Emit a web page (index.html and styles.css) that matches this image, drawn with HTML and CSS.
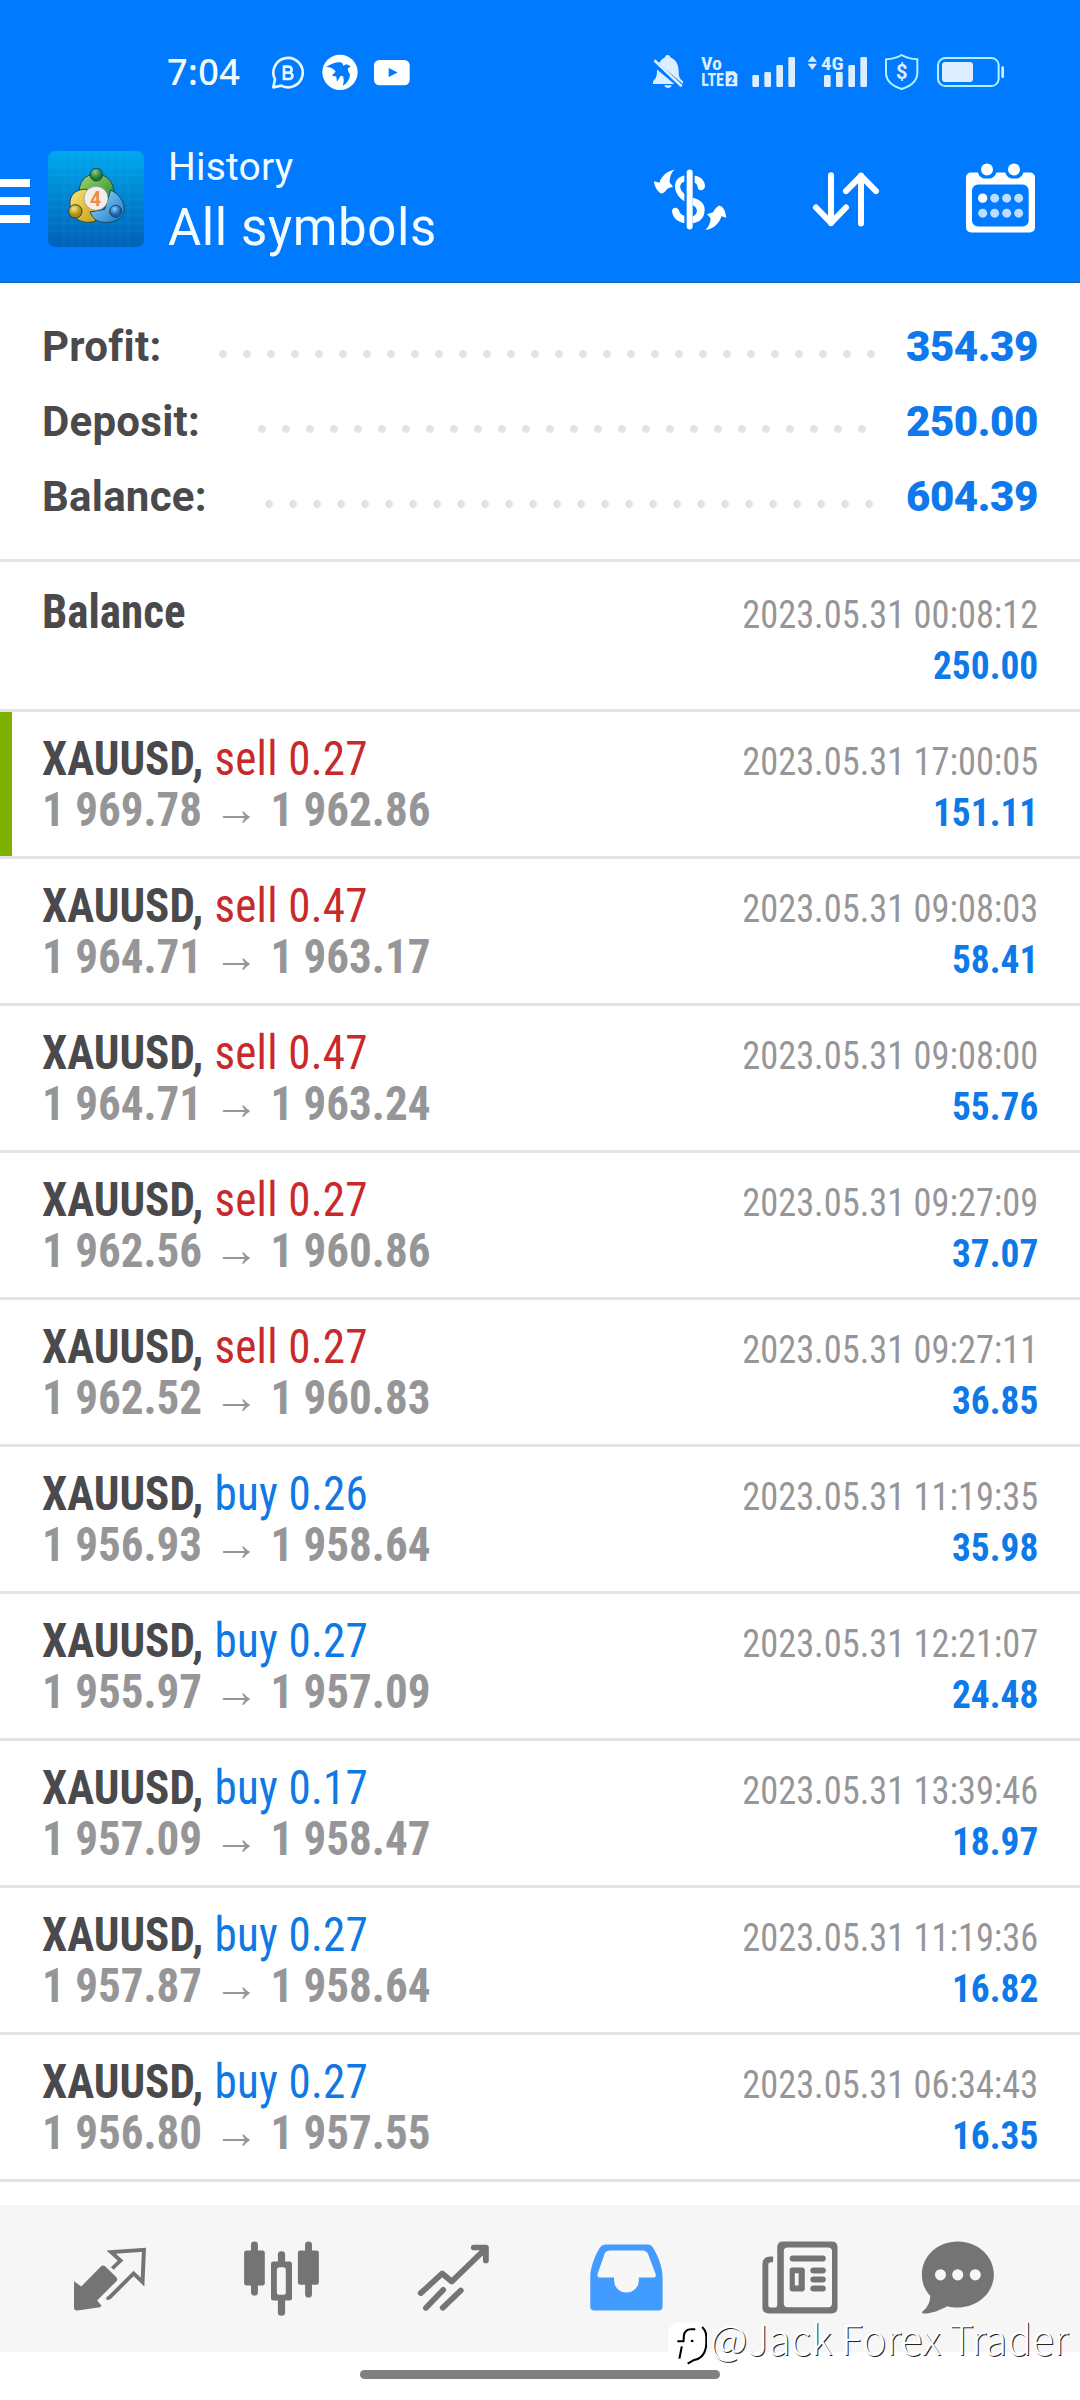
FILE: index.html
```html
<!DOCTYPE html>
<html lang="en">
<head>
<meta charset="utf-8">
<title>History</title>
<link rel="stylesheet" href="styles.css">
</head>
<body>
<header class="top">
  <div class="status">
    <span class="clock">7:04</span>
    <svg class="sico" viewBox="390 42 108 108" fill="none" stroke="#e8f6ff"><path d="M400 142 L405 118 A44 44 0 1 1 424 137 Z" stroke-width="8" stroke-linejoin="round"/><path d="M432 80h14a9 9 0 0 1 0 18h-14zM432 98h16a9 9 0 0 1 0 19h-16z" stroke-width="8"/></svg>
    <svg class="sico" viewBox="546 42 108 108"><circle cx="600" cy="97" r="53" fill="#fff"/><path d="M558 81q24-16 44-14 8 2 8 10l10-4 12 6-9 7q2 12 7 17-1 22-22 35 6-16 1-29l-7-2-11 18-2-15-14-4q10-6 12-12-12-14-29-13z" fill="#007aff"/></svg>
    <svg class="sico" viewBox="702 42 108 108"><rect x="702" y="60" width="107" height="76" rx="16" fill="#fff"/><path d="M746 84v27l27-13.500z" fill="#007aff"/></svg>
    <svg class="system" viewBox="66 42 1059 108" fill="#dceeff">
      <path d="M69 132v-8c10-8 12-18 12-30 0-22 12-36 24-42 2-9 14-9 16 0 15 6 25 20 25 42 0 16 3 24 13 30v8z"/><path d="M103 136h22c-2 11-20 11-22 0z"/><path d="M68 66l90 76" stroke="#007aff" stroke-width="17"/><path d="M73 61l82 78" stroke="#dceeff" stroke-width="8"/>
      <text class="net" x="213" y="91" font-size="54" textLength="63" lengthAdjust="spacingAndGlyphs">Vo</text>
      <text class="net" x="214" y="138" font-size="54" textLength="68" lengthAdjust="spacingAndGlyphs">LTE</text>
      <path d="M287 94h26l9 9v36h-35z"/><text class="net dark" x="294" y="132" font-size="38">2</text>
      <rect x="367" y="105" width="20" height="36" rx="4"/><rect x="403" y="96" width="20" height="45" rx="4"/><rect x="439" y="75" width="20" height="66" rx="4"/><rect x="475" y="51" width="20" height="90" rx="4"/>
      <path d="M533 65l14-18 14 18zM533 71h28l-14 18z"/>
      <text class="net" x="573" y="91" font-size="57" textLength="68" lengthAdjust="spacingAndGlyphs">4G</text>
      <rect x="582" y="105" width="20" height="36" rx="4"/><rect x="618" y="96" width="20" height="45" rx="4"/><rect x="655" y="75" width="20" height="66" rx="4"/><rect x="691" y="51" width="20" height="90" rx="4"/>
      <path d="M815 45c14 9 30 12 47 13v40c0 25-20 40-47 49-27-9-47-24-47-49V58c17-1 33-4 47-13z" fill="none" stroke="#b5f0ff" stroke-width="6"/>
      <text class="dollar" x="815" y="118" font-size="60" text-anchor="middle">$</text>
      <rect x="924" y="54" width="182" height="84" rx="22" fill="none" stroke="#b5f0ff" stroke-width="6"/><rect x="936" y="66" width="93" height="60" rx="10"/><rect x="1114" y="79" width="8" height="35" rx="4"/>
    </svg>
  </div>
  <div class="appbar">
    <div class="menu"><i></i><i></i><i></i></div>
    <svg class="logo" viewBox="144 63 288 288">
      <defs>
        <linearGradient id="bg" x1="0" y1="0" x2="0" y2="1"><stop offset="0" stop-color="#00a9ee"/><stop offset=".5" stop-color="#0083cf"/><stop offset="1" stop-color="#0060b8"/></linearGradient>
        <linearGradient id="gr" x1="0" y1="0" x2="1" y2="1"><stop offset="0" stop-color="#a5d96a"/><stop offset="1" stop-color="#268a35"/></linearGradient>
        <linearGradient id="ye" x1="0" y1="0" x2="1" y2="1"><stop offset="0" stop-color="#fbe87a"/><stop offset="1" stop-color="#c79a10"/></linearGradient>
        <linearGradient id="bl" x1="0" y1="0" x2="1" y2="1"><stop offset="0" stop-color="#9fe0ff"/><stop offset="1" stop-color="#1673c5"/></linearGradient>
        <radialGradient id="gb" cx=".4" cy=".3"><stop offset="0" stop-color="#8ed080"/><stop offset="1" stop-color="#1e7a32"/></radialGradient>
        <radialGradient id="yb" cx=".4" cy=".3"><stop offset="0" stop-color="#f7e680"/><stop offset="1" stop-color="#b08a10"/></radialGradient>
        <radialGradient id="bb" cx=".4" cy=".3"><stop offset="0" stop-color="#8ccbff"/><stop offset="1" stop-color="#1260b0"/></radialGradient>
      </defs>
      <rect x="144" y="63" width="288" height="288" rx="22" fill="url(#bg)"/>
      <path d="M192 63v288M216 63v288M240 63v288M264 63v288M288 63v288M312 63v288M336 63v288M360 63v288M384 63v288M144 111h288M144 135h288M144 159h288M144 183h288M144 207h288M144 231h288M144 255h288M144 279h288M144 303h288" stroke="#3fc0ff" stroke-opacity=".22" stroke-width="2"/>
      <g stroke="#174a55" stroke-width="3">
        <path d="M238 194c-4-38 18-62 50-62s56 22 54 66l-20 14-60-30z" fill="url(#gr)"/>
        <path d="M262 178c-30-2-56 12-52 52 4 32 34 56 76 44l8-30-30-26z" fill="url(#ye)"/>
        <path d="M332 180c26 12 44 38 40 66-8 30-56 40-84 24-8-6-14-14-18-24l44-8z" fill="url(#bl)"/>
        <circle cx="289" cy="134" r="19" fill="url(#gb)"/><circle cx="226" cy="244" r="20" fill="url(#yb)"/><circle cx="347" cy="244" r="18" fill="url(#bb)"/>
      </g>
      <circle cx="288" cy="205" r="36" fill="#f1eeec" stroke="#8c8c80" stroke-width="2"/>
      <text class="four" x="287" y="228" text-anchor="middle">4</text>
    </svg>
    <div class="titles"><div class="sub">History</div><div class="main">All symbols</div></div>
    <svg class="act" width="74" height="72" viewBox="99 67.500 222 216" fill="#fff"><path d="M209 96v162" stroke="#fff" stroke-width="18" stroke-linecap="round"/><path d="M193 105c-18 3-28 17-28 32 0 24 17 37 28 45v-22c-17-15-16-31 0-37z"/><path d="M224 106c17 1 29 14 31 29 1 13-14 19-21 10-2-11-4-16-10-18zM193 248c-21-3-36-18-37-37 0-9 12-14 20-4 3 11 8 17 17 19zM218 172c23 5 36 18 36 35 0 24-14 39-36 41v-20c17-8 17-27 0-34z"/><path d="M165 87c-11 7-16 22-16 39l10 12c-6 4-10 3-16 6-5 6-9 14-18 15-12-4-22-22-23-37l16 5c7-21 23-36 47-40zM256 268c9-8 15-19 16-35l-11-12c6-3 12-4 18-6 5-8 10-16 19-20 15 4 19 22 21 37l-15-5c-6 22-24 39-48 41z"/></svg>
    <svg class="act" width="68" height="72" viewBox="576 67.500 204 216" fill="none" stroke="#fff" stroke-width="18" stroke-linecap="round" stroke-linejoin="round"><path d="M633 104v144M588 201l45 46 45-46M723 249V105M678 152l45-46 45 46"/></svg>
    <svg class="act" width="71" height="72" viewBox="1035 67.500 213 216"><path d="M1053 96h21c3 11 11 18 21 18h13c10 0 18-7 21-18h27c3 11 11 18 21 18h12c10 0 18-7 21-18h20a15 15 0 0 1 15 15v150a15 15 0 0 1-15 15h-177a15 15 0 0 1-15-15V111a15 15 0 0 1 15-15zM1074 132a18 18 0 0 0-18 18v90a18 18 0 0 0 18 18h134a18 18 0 0 0 18-18v-90a18 18 0 0 0-18-18z" fill="#fff" fill-rule="evenodd"/><g fill="#fff"><circle cx="1101" cy="87" r="18"/><circle cx="1182" cy="87" r="18"/><circle cx="1088" cy="173" r="14"/></g><g fill="#b9deff"><circle cx="1124" cy="173" r="13.500"/><circle cx="1160" cy="173" r="13.500"/><circle cx="1196" cy="173" r="13.500"/><circle cx="1088" cy="218" r="13.500"/><circle cx="1124" cy="218" r="13.500"/><circle cx="1160" cy="218" r="13.500"/><circle cx="1196" cy="218" r="13.500"/></g></svg>
  </div>
</header>

<section class="summary">
  <div class="sum"><span>Profit:</span><i class="dots"></i><b>354.39</b></div>
  <div class="sum"><span>Deposit:</span><i class="dots"></i><b>250.00</b></div>
  <div class="sum"><span>Balance:</span><i class="dots"></i><b>604.39</b></div>
</section>

<main class="deals">
  <div class="deal first"><div class="l"><div><b class="sym">Balance</b></div></div><div class="r"><div class="date">2023.05.31 00:08:12</div><div class="val">250.00</div></div></div>
  <div class="deal marked"><div class="l"><div><b class="sym">XAUUSD,</b> <span class="sell">sell 0.27</span></div><div class="price">1 969.78<span class="arrow">→</span>1 962.86</div></div><div class="r"><div class="date">2023.05.31 17:00:05</div><div class="val">151.11</div></div></div>
  <div class="deal"><div class="l"><div><b class="sym">XAUUSD,</b> <span class="sell">sell 0.47</span></div><div class="price">1 964.71<span class="arrow">→</span>1 963.17</div></div><div class="r"><div class="date">2023.05.31 09:08:03</div><div class="val">58.41</div></div></div>
  <div class="deal"><div class="l"><div><b class="sym">XAUUSD,</b> <span class="sell">sell 0.47</span></div><div class="price">1 964.71<span class="arrow">→</span>1 963.24</div></div><div class="r"><div class="date">2023.05.31 09:08:00</div><div class="val">55.76</div></div></div>
  <div class="deal"><div class="l"><div><b class="sym">XAUUSD,</b> <span class="sell">sell 0.27</span></div><div class="price">1 962.56<span class="arrow">→</span>1 960.86</div></div><div class="r"><div class="date">2023.05.31 09:27:09</div><div class="val">37.07</div></div></div>
  <div class="deal"><div class="l"><div><b class="sym">XAUUSD,</b> <span class="sell">sell 0.27</span></div><div class="price">1 962.52<span class="arrow">→</span>1 960.83</div></div><div class="r"><div class="date">2023.05.31 09:27:11</div><div class="val">36.85</div></div></div>
  <div class="deal"><div class="l"><div><b class="sym">XAUUSD,</b> <span class="buy">buy 0.26</span></div><div class="price">1 956.93<span class="arrow">→</span>1 958.64</div></div><div class="r"><div class="date">2023.05.31 11:19:35</div><div class="val">35.98</div></div></div>
  <div class="deal"><div class="l"><div><b class="sym">XAUUSD,</b> <span class="buy">buy 0.27</span></div><div class="price">1 955.97<span class="arrow">→</span>1 957.09</div></div><div class="r"><div class="date">2023.05.31 12:21:07</div><div class="val">24.48</div></div></div>
  <div class="deal"><div class="l"><div><b class="sym">XAUUSD,</b> <span class="buy">buy 0.17</span></div><div class="price">1 957.09<span class="arrow">→</span>1 958.47</div></div><div class="r"><div class="date">2023.05.31 13:39:46</div><div class="val">18.97</div></div></div>
  <div class="deal"><div class="l"><div><b class="sym">XAUUSD,</b> <span class="buy">buy 0.27</span></div><div class="price">1 957.87<span class="arrow">→</span>1 958.64</div></div><div class="r"><div class="date">2023.05.31 11:19:36</div><div class="val">16.82</div></div></div>
  <div class="deal"><div class="l"><div><b class="sym">XAUUSD,</b> <span class="buy">buy 0.27</span></div><div class="price">1 956.80<span class="arrow">→</span>1 957.55</div></div><div class="r"><div class="date">2023.05.31 06:34:43</div><div class="val">16.35</div></div></div>
</main>

<nav class="tabs">
  <svg viewBox="203.300 229.500 232.300 252" preserveAspectRatio="none" fill="#747474"><path d="M215 362l21 16 57-60q6-6 13 0l32 32q5 6 0 12l-56 58 13 16q-1 3-5 4l-65 10q-10 1-10-9z"/><path d="M326 324l24-24-27-25 95-7-4 97-26-26-71 73" fill="none" stroke="#747474" stroke-width="11.500"/><circle cx="314" cy="413" r="5.500"/></svg>
  <svg viewBox="702.800 229.500 232.300 252" preserveAspectRatio="none" fill="#747474"><rect x="709" y="270" width="60" height="105" rx="7"/><rect x="729" y="243" width="20" height="162" rx="10"/><rect x="865" y="270" width="61" height="103" rx="7"/><rect x="886" y="243" width="20" height="168" rx="10"/><rect x="807" y="272" width="21" height="50" rx="10"/><rect x="807" y="400" width="21" height="66" rx="10"/><rect x="787" y="303" width="61" height="117" rx="7"/><rect x="804" y="320" width="26" height="83" rx="8" fill="#f5f5f5"/></svg>
  <svg viewBox="1202.300 229.500 232.300 252" preserveAspectRatio="none" fill="none" stroke="#747474" stroke-width="17" stroke-linecap="round"><path d="M1222 398l62-59 28 24 98-98M1376 261h35v39" stroke-linejoin="round"/><path d="M1237 442l50-54M1286 442l52-52"/></svg>
  <svg viewBox="133.600 229.500 232.300 252" preserveAspectRatio="none"><path d="M190 252h124q9 0 14 9c14 24 28 58 28 90v87q0 12-12 12H158q-12 0-12-12v-87c0-32 14-66 28-90q6-9 16-9z" fill="#429bff"/><path d="M204 270h93q12 0 17 11l22 60q2 10-8 10h-41v9a36 36 0 0 1-72 0v-9h-41q-9 0-7-10l20-60q4-11 17-11z" fill="#f7f7f7"/></svg>
  <svg viewBox="633.100 229.500 232.300 252" preserveAspectRatio="none" fill="#747474"><path d="M706 243h141q17 0 17 17v182q0 17-17 17H665q-19 0-19-17V311q0-23 23-23h8v17h-6q-8 0-8 8v120q0 8 7 8h13q6 0 6-8V260q0-17 17-17zM719 261q-11 0-11 11v157q0 11 11 11h118q11 0 11-11V272q0-11-11-11z" fill-rule="evenodd"/><rect x="725" y="285" width="105" height="18" rx="9"/><path d="M733 321h28q8 0 8 8v56q0 8-8 8h-28q-8 0-8-8v-56q0-8 8-8zM740 338v37h11v-37z" fill-rule="evenodd"/><rect x="785" y="321" width="45" height="18" rx="9"/><rect x="785" y="348" width="45" height="18" rx="9"/><rect x="785" y="375" width="45" height="18" rx="9"/></svg>
  <svg viewBox="1091.900 229.500 232.300 252" preserveAspectRatio="none"><path d="M1213 243c58 0 105 44 105 99s-47 99-105 99c-11 0-20-1-30-4-22 12-44 22-70 22q-6-2-2-6c16-13 23-30 22-48-16-16-24-38-24-63 0-55 46-99 104-99z" fill="#747474"/><g fill="#f7f7f7"><ellipse cx="1163" cy="343" rx="16" ry="17"/><ellipse cx="1213" cy="343" rx="16" ry="17"/><ellipse cx="1264" cy="343" rx="16" ry="17"/></g></svg>
</nav>
<div class="home"></div>
<div class="watermark"><svg viewBox="371 485 113 129" preserveAspectRatio="none"><path d="M412 486h36q34 0 34 40v28q0 38-33 44l-22 12 3-12h-27q-32-2-32-42v-30q0-40 41-40z" fill="#fff"/><path d="M450 507h-12q-19 0-21 20l-1 16h-18M411 558l-7 37M470 500q12 12 12 30v20q-2 44-38 50l-16 10" fill="none" stroke="#000" stroke-width="6"/><circle cx="441" cy="542" r="4"/></svg><span>@Jack Forex Trader</span></div>
</body>
</html>
```
FILE: styles.css
```css
* { box-sizing: border-box; }
body { margin: 0; width: 1080px; height: 2400px; background: #fff; font-family: Roboto, sans-serif; position: relative; overflow: hidden; display: flex; flex-direction: column; }
svg { display: block; flex: none; }

.top { height: 283px; background: #007aff; border-bottom: 2px solid #1b6dc1; color: #f2fcff; }
.status { height: 116px; padding: 28px 75px 0 167px; display: flex; align-items: center; }
.clock { font: 500 36px/44px "Noto Sans", sans-serif; width: 103px; letter-spacing: .4px; }
.sico { width: 36px; height: 36px; margin-right: 16px; }
.system { width: 353px; height: 36px; margin-left: auto; overflow: visible; }
.net, .dollar { font-family: Roboto, sans-serif; font-weight: 700; font-stretch: 75%; }
.dollar { font-stretch: 100%; }
.dark { fill: #007aff; }

.appbar { height: 165px; display: flex; align-items: center; padding-right: 44px; }
.menu { width: 30px; display: grid; gap: 10px; margin: 4px 18px 0 0; }
.menu i { height: 8px; background: #fff; }
.logo { width: 96px; height: 96px; margin-right: 24px; }
.four { font: 700 58px Roboto, sans-serif; fill: #f08a42; }
.titles { flex: 1; white-space: nowrap; padding-top: 7px; }
.sub { font-size: 39px; line-height: 50px; letter-spacing: .2px; }
.main { font-size: 51px; line-height: 71px; letter-spacing: .6px; }
.act + .act { margin-left: 85px; }

.summary { height: 279px; padding: 26px 42px 0 42px; border-bottom: 3px solid #e4e4e4; }
.sum { height: 75px; display: flex; align-items: center; font-size: 42px; line-height: 75px; font-weight: 700; color: #4a4a4d; letter-spacing: .25px; }
.sum b { color: #0e78ec; letter-spacing: -.4px; }
.dots { flex: 1; height: 8px; margin: 15px 26px 0 50px; background: radial-gradient(circle, #e3e3e3 3.500px, transparent 4.300px) 0 0 / 24px 8px repeat-x; }

.deals { font-stretch: 75%; font-family: "Roboto Condensed", Roboto, sans-serif; }
.deal { height: 147px; border-bottom: 3px solid #e4e4e4; padding: 21px 42px 0 42px; display: flex; justify-content: space-between; font-size: 48px; line-height: 51px; white-space: nowrap; }
.first { height: 150px; padding-top: 24px; }
.marked { background: linear-gradient(#7fb000, #7fb000) 0 0 / 12px 100% no-repeat; }
.l { transform: scaleX(.938); transform-origin: 0 0; }
.sym { color: #4a4a4d; }
.sell, .buy { margin-left: 1px; letter-spacing: .25px; }
.sell { color: #c82a2c; }
.buy { color: #0e78e4; }
.price { font-weight: 700; color: #969698; }
.arrow { display: inline-block; width: 73px; text-align: center; font: 700 48px/40px "Noto Sans", sans-serif; vertical-align: 1px; }
.r { font-size: 39px; text-align: right; padding-top: 4px; }
.date, .val { transform: scaleX(.933); transform-origin: 100% 0; }
.date { color: #969698; }
.val { font-weight: 700; color: #0e79e8; transform: scaleX(.958); }

.tabs { height: 147px; margin-top: 23px; padding-left: 70px; background: #f6f6f6; display: flex; align-items: center; gap: 92px; }
.tabs svg { width: 80px; height: 84px; }
.tabs svg:last-child { margin-left: -14px; }
.home { width: 360px; height: 9px; margin: 18px auto 0; border-radius: 5px; background: #808080; }

.watermark { position: absolute; left: 668px; top: 2321px; display: flex; align-items: center; height: 44px; white-space: nowrap; }
.watermark svg { width: 39px; height: 43px; margin-right: 3px; }
.watermark span { font: 300 41px/44px "Noto Sans CJK SC", "Noto Sans", sans-serif; color: #fff; text-shadow: 1px 1px 0 #222; margin-top: -13px; letter-spacing: -.15px; }
```
